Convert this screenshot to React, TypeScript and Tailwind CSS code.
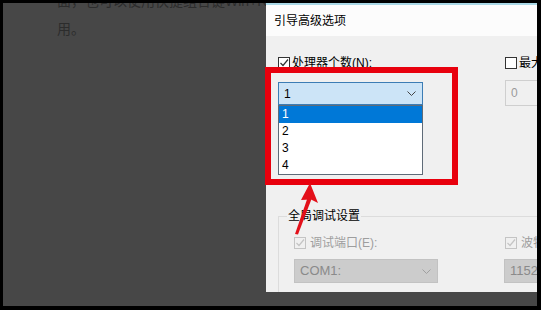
import React from 'react';

const font = "font-['Liberation_Sans','Noto_Sans_CJK_SC',sans-serif]";

const Check: React.FC<{ checked?: boolean; disabled?: boolean }> = ({ checked, disabled }) => (
  <span
    className={`flex h-[12px] w-[12px] shrink-0 items-center justify-center border ${
      disabled ? 'border-[#c4c4c4] bg-[#f0f0f0]' : 'border-[#333333] bg-white'
    }`}
  >
    {checked && (
      <svg width="10" height="10" viewBox="0 0 10 10">
        <polyline
          points="1.5,5 4,7.5 9,1.5"
          fill="none"
          stroke={disabled ? '#c4c4c4' : '#333333'}
          strokeWidth="1.2"
        />
      </svg>
    )}
  </span>
);

const Chevron: React.FC<{ color: string }> = ({ color }) => (
  <svg width="9" height="5" viewBox="0 0 9 5">
    <polyline points="0.5,0.5 4.5,4.5 8.5,0.5" fill="none" stroke={color} strokeWidth="1" />
  </svg>
);

const App: React.FC = () => {
  return (
    <div className={`relative h-[310px] w-[541px] overflow-hidden bg-black pl-[3px] pr-[4px] pt-[3px] pb-[4px] ${font}`}>
      <div className="flex h-full bg-[#474747]">
        {/* page text behind the dialog */}
        <div className="w-[263px] overflow-hidden pl-[54px]">
          <div className="-mt-[16px] whitespace-nowrap text-[14px] leading-[28px] text-[#2c2c2c]">
            <p>面，也可以使用快捷组合键Win+R打开运行</p>
            <p>用。</p>
          </div>
        </div>

        {/* dialog */}
        <div className="flex h-[289px] w-[271px] flex-col overflow-hidden">
          <div className="flex h-[33px] shrink-0 items-center border-t-2 border-[#a9d8e6] bg-[#fcfcfc] pl-[8px] text-[12px] text-black">
            引导高级选项
          </div>
          <div className="flex-1 bg-[#f0f0f0] pl-[12px] text-[12px] text-black">
            <div className="mt-[21px] flex h-[50px] w-[320px]">
              <div className="w-[227px]">
                <div className="flex h-[12px] items-center gap-[2px]">
                  <Check checked />
                  <span className="leading-[12px]">处理器个数(N):</span>
                </div>
                <div className="relative mt-[13px] w-[145px]">
                  <div className="flex h-[23px] items-center justify-between border border-[#3c7db5] bg-[#cce4f7] pl-[5px] pr-[6px]">
                    <span>1</span>
                    <Chevron color="#444444" />
                  </div>
                  <ul className="absolute left-0 top-full z-10 w-full border border-[#5f6b78] bg-white">
                    <li className="h-[17px] bg-[#0078d7] pl-[3px] leading-[17px] text-white">1</li>
                    <li className="h-[17px] pl-[3px] leading-[17px]">2</li>
                    <li className="h-[17px] pl-[3px] leading-[17px]">3</li>
                    <li className="h-[17px] pl-[3px] leading-[17px]">4</li>
                  </ul>
                </div>
              </div>
              <div className="flex-1">
                <div className="flex h-[12px] items-center gap-[2px]">
                  <Check />
                  <span className="leading-[12px]">最大内存(M):</span>
                </div>
                <div className="mt-[11px] flex h-[26px] w-[80px] items-center border border-[#cfcfcf] bg-[#f0f0f0] pl-[5px] text-[#9a9a9a]">
                  0
                </div>
              </div>
            </div>

            <fieldset className="mt-[101px] h-[140px] w-[320px] border border-[#dcdcdc] pl-[15px]">
              <legend className="-ml-[7px] px-[1px] text-[12px] leading-[16px]">全局调试设置</legend>
              <div className="mt-[13px] flex">
                <div className="w-[211px]">
                  <div className="flex h-[12px] items-center gap-[4px] text-[#9e9e9e]">
                    <Check checked disabled />
                    <span className="leading-[12px]">调试端口(E):</span>
                  </div>
                  <div className="mt-[10px] flex h-[24px] w-[144px] items-center justify-between border border-[#c2c2c2] bg-[#cccccc] pl-[5px] pr-[6px] text-[13px] text-[#8a8a8a]">
                    <span>COM1:</span>
                    <Chevron color="#a0a0a0" />
                  </div>
                </div>
                <div className="flex-1">
                  <div className="flex h-[12px] items-center gap-[4px] text-[#9e9e9e]">
                    <Check checked disabled />
                    <span className="leading-[12px]">波特率(B):</span>
                  </div>
                  <div className="-ml-[1px] mt-[10px] flex h-[24px] w-[80px] items-center border border-[#c2c2c2] bg-[#cccccc] pl-[5px] text-[13px] text-[#8a8a8a]">
                    115200
                  </div>
                </div>
              </div>
            </fieldset>
          </div>
        </div>
      </div>

      {/* annotation: red frame */}
      <div className="pointer-events-none absolute left-[265px] top-[67px] h-[118px] w-[193px] border-[6px] border-[#e8000d]" />

      {/* annotation: red arrow */}
      <svg className="pointer-events-none absolute left-[288px] top-[178px]" width="36" height="60" viewBox="0 0 36 60">
        <polygon points="7,56 19.5,20 23.5,21 10,56.5" fill="#e3101a" />
        <polygon points="22,5 30,25 23,21.5 13,22" fill="#e3101a" />
      </svg>
    </div>
  );
};

export default App;
